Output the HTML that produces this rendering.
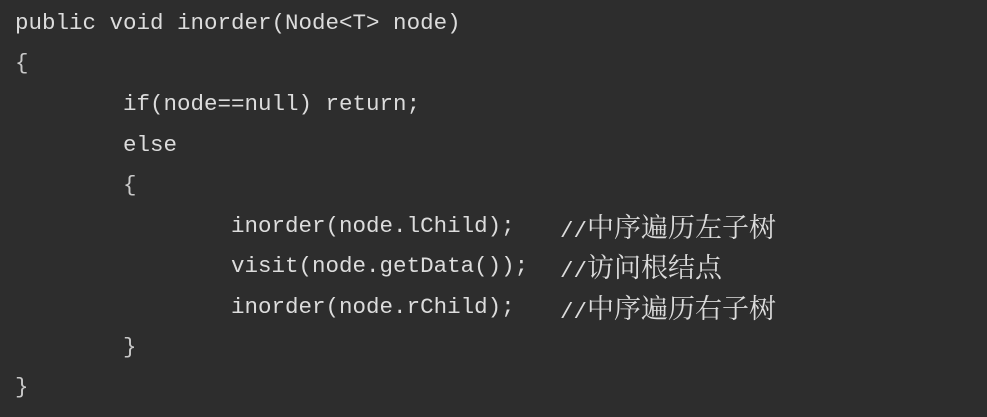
<!DOCTYPE html>
<html><head><meta charset="utf-8"><style>
html,body{margin:0;padding:0;}
body{width:987px;height:417px;background:#2d2d2d;position:relative;overflow:hidden;}
.l{position:absolute;left:15px;white-space:pre;color:#dcdcdc;font-family:"Liberation Mono",monospace;font-size:22.5px;line-height:40px;height:40px;}
.c{font-family:"Noto Serif CJK SC","Liberation Serif",serif;font-size:27px;line-height:40px;vertical-align:baseline;}
.b{color:#c8c8c8;}
</style></head><body>
<div class="l" style="top:3px">public void inorder(Node&lt;T&gt; node)</div>
<div class="l b" style="top:43px">{</div>
<div class="l" style="top:84px">        if(node==null) return;</div>
<div class="l" style="top:125px">        else</div>
<div class="l b" style="top:165px">        {</div>
<div class="l" style="top:206px">                inorder(node.lChild);</div>
<div class="l" style="top:206px;left:560px">//<span class="c">中序遍历左子树</span></div>
<div class="l" style="top:246px">                visit(node.getData());</div>
<div class="l" style="top:246px;left:560px">//<span class="c">访问根结点</span></div>
<div class="l" style="top:287px">                inorder(node.rChild);</div>
<div class="l" style="top:287px;left:560px">//<span class="c">中序遍历右子树</span></div>
<div class="l b" style="top:327px">        }</div>
<div class="l b" style="top:367px">}</div>
</body></html>
